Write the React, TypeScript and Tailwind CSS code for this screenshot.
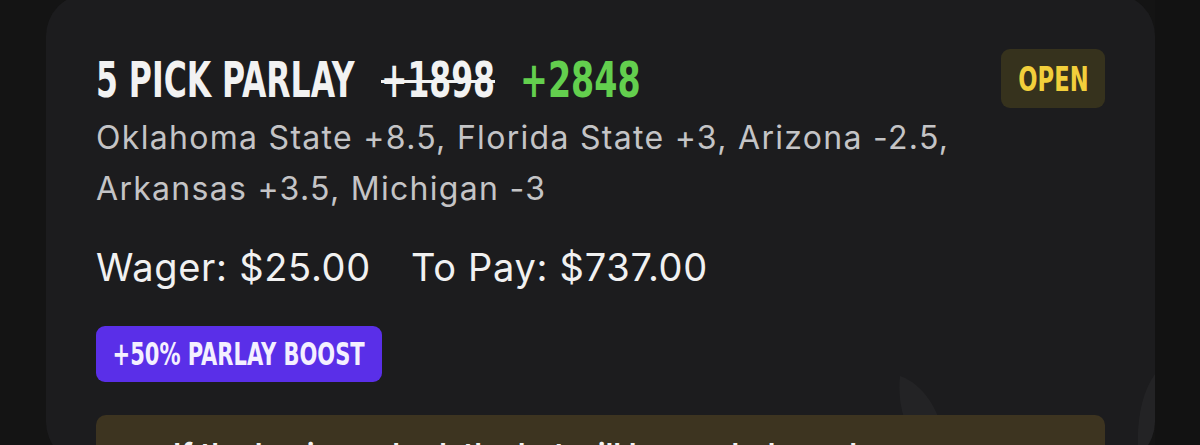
import React from "react"

const narrow = "font-['Liberation_Sans_Narrow','DejaVu_Sans_Condensed',sans-serif] font-bold"
const body = "font-['Inter','Liberation_Sans',sans-serif]"

export default function App() {
  return (
    <div className="w-[1200px] h-[445px] overflow-hidden bg-[#141414] flex">
      <div className="relative ml-[46px] -mt-[6px] w-[1109px] h-[470px] rounded-[42px] bg-[#1c1c1e] px-[50px] pt-[55px] overflow-hidden">
        {/* faint logo watermark */}
        <svg className="absolute left-[848px] top-[380px] w-[120px] h-[90px]" viewBox="0 0 120 90" fill="#ffffff" fillOpacity={0.03}>
          <path d="M6 2 C30 10 50 40 52 80 L40 90 C18 70 2 40 6 2 Z" />
          <path d="M52 80 C60 50 80 40 110 44 C100 70 80 86 52 90 Z" />
        </svg>
        <svg className="absolute left-[1085px] top-[380px] w-[30px] h-[90px]" viewBox="0 0 30 90" fill="#ffffff" fillOpacity={0.03}>
          <path d="M24 0 C10 20 4 50 8 90 L30 90 L30 0 Z" />
        </svg>

        <div className="relative flex justify-between items-start">
          <div className="flex flex-col">
            <div className="mt-[4px] flex items-baseline text-[50px] leading-none whitespace-nowrap">
              <div className="w-[256px]">
                <span className={`${narrow} inline-block origin-left scale-x-[0.70] text-[#f2f2f2]`}>5 PICK PARLAY</span>
              </div>
              <div className="ml-[29px] w-[111px]">
                <span className={`${narrow} inline-block origin-left scale-x-[0.70] text-[#f2f2f2] line-through decoration-[3px]`}>+1898</span>
              </div>
              <div className="ml-[28px] w-[116px]">
                <span className={`${narrow} inline-block origin-left scale-x-[0.74] text-[#63cf4e]`}>+2848</span>
              </div>
            </div>
            <p className={`${body} mt-[7px] w-[900px] text-[32px] tracking-[1.3px] leading-[51px] text-[#c4c4c6]`}>
              Oklahoma State +8.5, Florida State +3, Arizona -2.5,
              <br />
              Arkansas +3.5, Michigan -3
            </p>
          </div>
          <div className="w-[104px] h-[59px] rounded-[9px] bg-[#36321d] flex items-center justify-center">
            <span className={`${narrow} inline-block scale-x-[0.74] text-[34px] leading-none text-[#f2cf3b]`}>OPEN</span>
          </div>
        </div>

        <div className={`${body} relative mt-[34px] flex gap-[40px] text-[38px] tracking-[0.7px] leading-none text-[#f1f1f1]`}>
          <span>Wager: $25.00</span>
          <span>To Pay: $737.00</span>
        </div>

        <div className="relative mt-[40px] w-[286px] h-[56px] rounded-[9px] bg-[#5a2fe8] flex items-center justify-center">
          <span className={`${narrow} inline-block scale-x-[0.73] text-[32px] leading-none text-[#f4f0ff] whitespace-nowrap`}>+50% PARLAY BOOST</span>
        </div>

        <div className="relative mt-[33px] h-[120px] rounded-[10px] bg-[#3d3420] pl-[77px] pt-[24px]">
          <p className={`${body} text-[30px] font-semibold leading-none text-[#f2f2f2]`}>
            If the leg is pushed, the bet will be graded as a loss.
          </p>
        </div>
      </div>
      <div className="flex-1 bg-[#121212]" />
    </div>
  )
}
